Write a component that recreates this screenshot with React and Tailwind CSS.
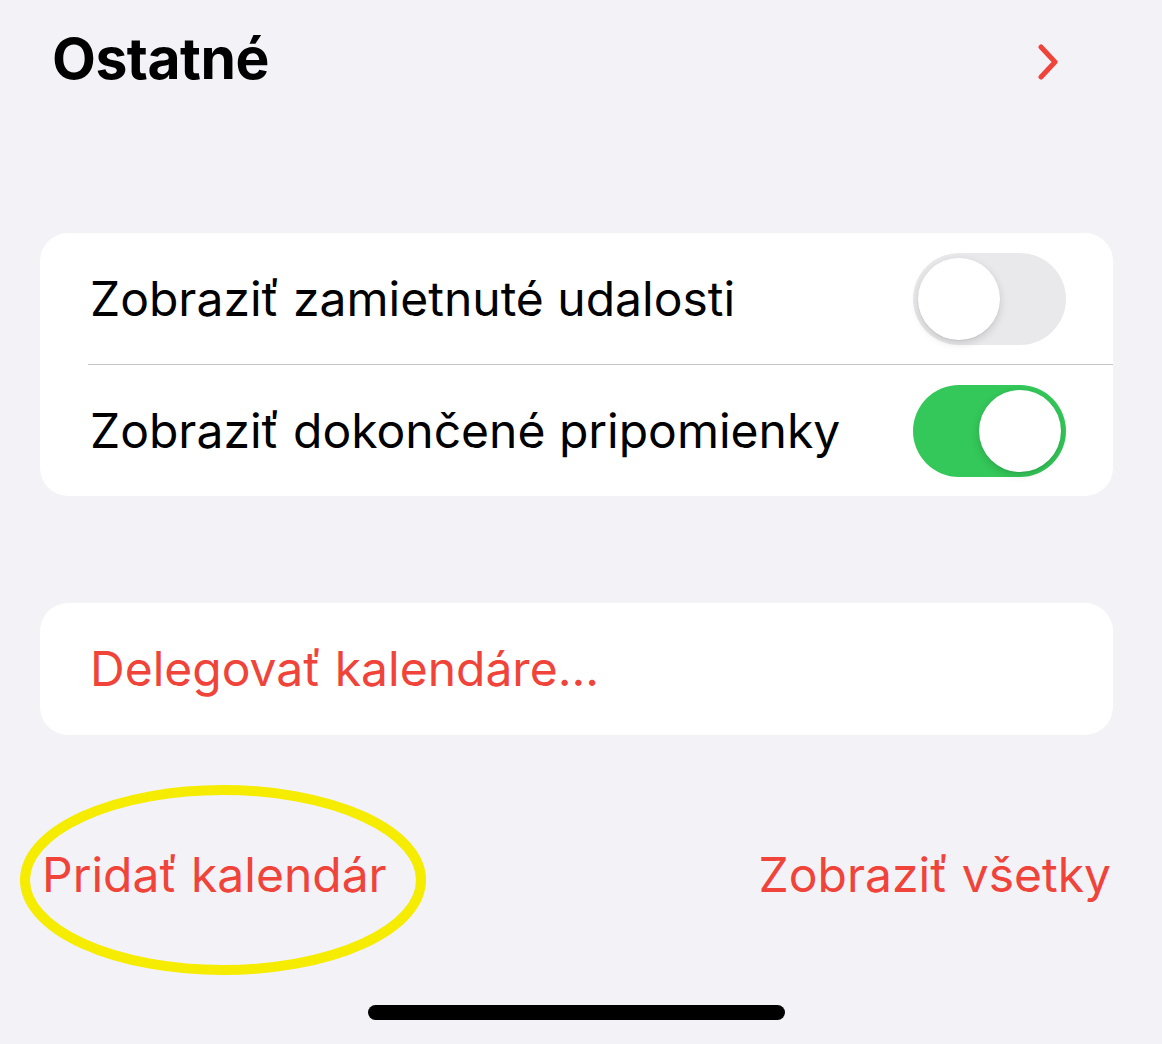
import React from 'react';

const font = { fontFamily: 'Inter, "Noto Sans", sans-serif' };

const Toggle = ({ on }) => (
  <div
    className={`relative w-[153px] h-[92px] rounded-full shrink-0 ${
      on ? 'bg-[#34c759]' : 'bg-[#e9e9eb]'
    }`}
  >
    <div
      className={`absolute top-[5px] w-[82px] h-[82px] rounded-full bg-white shadow-[0_3px_8px_rgba(0,0,0,0.15),0_1px_1px_rgba(0,0,0,0.06)] ${
        on ? 'right-[5px]' : 'left-[5px]'
      }`}
    />
  </div>
);

const App = () => {
  return (
    <div className="w-full h-[1044px] bg-[#f2f2f7] flex flex-col pl-10 pr-[49px] overflow-hidden" style={font}>
      {/* Header */}
      <div className="h-[120px] flex items-start justify-between pl-3 pr-[53px] pt-[25px]">
        <h1 className="text-[57px] leading-[68px] font-bold text-black tracking-[-0.5px]">Ostatné</h1>
        <svg width="24" height="36" viewBox="0 0 24 36" className="mt-[19px]">
          <path d="M5 3 L19 18 L5 33" fill="none" stroke="#f0443a" strokeWidth="5" strokeLinecap="round" strokeLinejoin="round" />
        </svg>
      </div>

      {/* Toggles card */}
      <div className="mt-[113px] bg-white rounded-[28px] overflow-hidden">
        <div className="h-[131px] flex items-center justify-between pl-[50px] pr-[47px]">
          <span className="text-[48px] leading-[58px] text-black">Zobraziť zamietnuté udalosti</span>
          <Toggle on={false} />
        </div>
        <div className="ml-[48px] h-px bg-[#c6c6c8]" />
        <div className="h-[131px] flex items-center justify-between pl-[50px] pr-[47px]">
          <span className="text-[48px] leading-[58px] text-black">Zobraziť dokončené pripomienky</span>
          <Toggle on={true} />
        </div>
      </div>

      {/* Delegate card */}
      <div className="mt-[107px] bg-white rounded-[28px] h-[132px] flex items-center pl-[50px]">
        <span className="text-[48px] leading-[58px] text-[#f0443a]">Delegovať kalendáre...</span>
      </div>

      {/* Footer actions */}
      <div className="mt-[111px] flex items-start justify-between pl-[2px] pr-[2px]">
        <div className="relative">
          <span className="text-[48px] leading-[58px] text-[#f0443a]">Pridať kalendár</span>
          <svg
            className="absolute left-[-24px] top-[-63px] pointer-events-none"
            width="410"
            height="195"
            viewBox="0 0 410 195"
          >
            <ellipse cx="205" cy="97" rx="198" ry="90" fill="none" stroke="#f5ec00" strokeWidth="10" />
          </svg>
        </div>
        <span className="text-[48px] leading-[58px] text-[#f0443a]">Zobraziť všetky</span>
      </div>

      {/* Home indicator */}
      <div className="mt-auto mb-[24px] flex justify-center">
        <div className="w-[417px] h-[15px] rounded-full bg-black" />
      </div>
    </div>
  );
};

export default App;
